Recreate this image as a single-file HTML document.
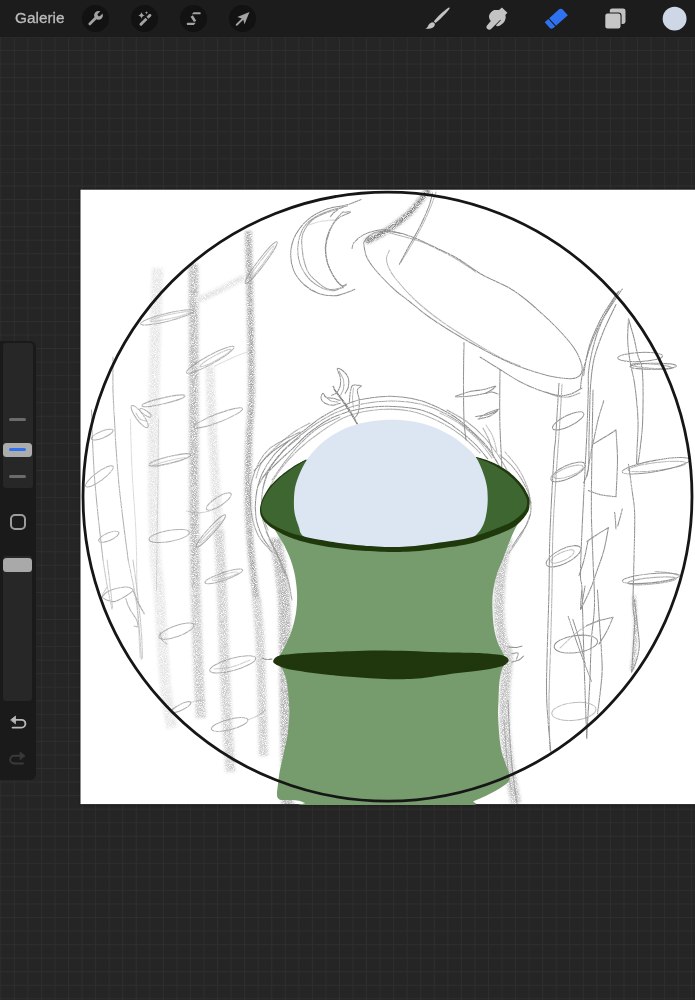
<!DOCTYPE html>
<html lang="fr">
<head>
<meta charset="utf-8">
<title>Procreate</title>
<style>
  html, body { margin: 0; padding: 0; }
  body {
    width: 695px; height: 1000px; overflow: hidden; position: relative;
    background-color: #252525;
    background-image:
      linear-gradient(to right, #2e2e2e 0, #2e2e2e 1px, transparent 1px),
      linear-gradient(to bottom, #2e2e2e 0, #2e2e2e 1px, transparent 1px);
    background-size: 13.56px 13.56px;
    background-position: 0.3px 9.4px;
    font-family: "Liberation Sans", sans-serif;
  }
  #topbar {
    position: absolute; left: 0; top: 0; width: 695px; height: 37px;
    background: #1c1c1c;
  }
  #gallery {
    position: absolute; left: 15.1px; top: 9.4px; font-size: 15.3px; line-height: 17px;
    color: #bcbcbc; letter-spacing: 0px; will-change: opacity; opacity: 0.999; -webkit-text-stroke: 0.3px #bcbcbc;
  }
  .tbtn {
    position: absolute; top: 5.1px; width: 26.6px; height: 26.6px; border-radius: 50%;
    background: #121212;
  }
  .tbtn svg { position: absolute; left: 0; top: 0; width: 26.6px; height: 26.6px; }
  #canvas {
    position: absolute; left: 80.5px; top: 189.7px; width: 620px; height: 614.4px;
    background: #ffffff; box-shadow: 0 0 2px 1px rgba(0,0,0,0.35);
  }
  #art { position: absolute; left: 0; top: 0; width: 695px; height: 1000px; }
  #sidebar {
    position: absolute; left: -4px; top: 341px; width: 39.5px; height: 438.7px;
    background: #1a1a1a; border-radius: 0 6px 6px 0;
  }
  .track { position: absolute; background: #272727; border-radius: 3px; }
  .thumb { position: absolute; background: #acacac; border-radius: 3.5px; }
  .tick { position: absolute; background: #6b6b6b; border-radius: 2px; height: 3.4px; left: 9.2px; width: 17.1px; }
</style>
</head>
<body>
<div id="canvas"></div>
<svg id="art" viewBox="0 0 695 1000">

  <defs>
    <clipPath id="cv"><rect x="80.5" y="189.7" width="620" height="614.4"/></clipPath>
    <filter id="grain" x="0" y="0" width="100%" height="100%" filterUnits="userSpaceOnUse" primitiveUnits="userSpaceOnUse">
      <feGaussianBlur in="SourceGraphic" stdDeviation="1.5" result="b"/>
      <feTurbulence type="fractalNoise" baseFrequency="1.1" numOctaves="2" seed="7" result="n"/>
      <feColorMatrix in="n" type="matrix" values="0 0 0 0 0  0 0 0 0 0  0 0 0 0 0  2.4 0 0 0 -0.55" result="a"/>
      <feComposite in="b" in2="a" operator="in"/>
    </filter>
    <filter id="grain2" x="0" y="0" width="100%" height="100%" filterUnits="userSpaceOnUse" primitiveUnits="userSpaceOnUse">
      <feTurbulence type="fractalNoise" baseFrequency="1.3" numOctaves="1" seed="11" result="n"/>
      <feColorMatrix in="n" type="matrix" values="0 0 0 0 0  0 0 0 0 0  0 0 0 0 0  2.2 0 0 0 -0.1" result="a"/>
      <feComposite in="SourceGraphic" in2="a" operator="in"/>
    </filter>
  </defs>
  <rect x="80.5" y="189.7" width="620" height="614.4" fill="#ffffff"/>
  <g clip-path="url(#cv)">
  <g id="sketch" fill="none" stroke="#8f8f8f" stroke-width="1.05" stroke-linecap="round" stroke-linejoin="round">
  <g filter="url(#grain)" stroke-linecap="butt">
<path d="M157.7,268.0 C157.2,281.7 155.7,319.7 155.0,350.0 C154.3,380.3 153.5,416.7 153.5,450.0 C153.5,483.3 154.1,526.7 155.0,550.0 C155.9,573.3 157.3,568.3 159.0,590.0 C160.7,611.7 162.9,657.0 165.0,680.0 C167.1,703.0 170.7,720.0 171.8,728.0" stroke="#e4e4e4" stroke-width="11.0"/>
<path d="M193.5,264.0 C193.6,285.0 193.7,350.7 193.8,390.0 C193.9,429.3 193.7,466.7 194.0,500.0 C194.3,533.3 195.2,575.0 195.5,590.0" stroke="#b4b4b4" stroke-width="9.5"/>
<path d="M195.5,588.0 C195.9,600.0 197.1,638.3 198.0,660.0 C198.9,681.7 200.5,708.3 201.0,718.0" stroke="#c4c4c4" stroke-width="10.0"/>
<path d="M248.3,231.0 C248.6,242.5 249.5,273.5 250.0,300.0 C250.5,326.5 251.7,366.7 251.5,390.0 C251.3,413.3 249.6,421.7 249.0,440.0 C248.4,458.3 247.8,483.3 248.0,500.0 C248.2,516.7 249.0,526.7 250.0,540.0 C251.0,553.3 252.9,570.0 254.0,580.0 C255.1,590.0 256.1,596.7 256.5,600.0" stroke="#a0a0a0" stroke-width="6.5"/>
<path d="M256.3,598.0 C256.9,605.0 259.1,623.0 260.0,640.0 C260.9,657.0 261.4,680.7 262.0,700.0 C262.6,719.3 263.2,746.7 263.5,756.0" stroke="#c8c8c8" stroke-width="9.0"/>
<path d="M210.0,366.0 C210.2,371.7 210.4,386.0 211.0,400.0 C211.6,414.0 212.6,433.3 213.5,450.0 C214.4,466.7 215.6,485.0 216.5,500.0 C217.4,515.0 218.6,533.3 219.0,540.0" stroke="#e0e0e0" stroke-width="9.0"/>
<path d="M218.8,530.0 C219.2,536.7 220.3,555.0 221.0,570.0 C221.7,585.0 222.2,598.3 223.0,620.0 C223.8,641.7 224.8,674.7 226.0,700.0 C227.2,725.3 229.8,760.0 230.5,772.0" stroke="#cacaca" stroke-width="10.0"/>
<path d="M275.0,538.0 C275.8,542.5 278.5,554.7 280.0,565.0 C281.5,575.3 283.2,585.8 284.0,600.0 C284.8,614.2 284.7,630.0 285.0,650.0 C285.3,670.0 285.5,694.0 286.0,720.0 C286.5,746.0 287.5,791.7 287.8,806.0" stroke="#b0b0b0" stroke-width="12.0"/>
<path d="M507.0,538.0 C505.9,544.2 501.8,563.0 500.5,575.0 C499.2,587.0 498.8,599.2 499.0,610.0 C499.2,620.8 500.6,632.5 502.0,640.0 C503.4,647.5 507.0,646.7 507.5,655.0 C508.0,663.3 505.4,677.5 505.0,690.0 C504.6,702.5 504.3,717.5 505.0,730.0 C505.7,742.5 507.2,752.8 509.0,765.0 C510.8,777.2 514.8,796.7 516.0,803.0" stroke="#bdbdbd" stroke-width="10.5"/>
<path d="M244.0,277.0 C240.0,279.2 228.0,286.0 220.0,290.0 C212.0,294.0 200.0,299.2 196.0,301.0" stroke="#dedede" stroke-width="6.0"/>
<path d="M429.0,189.0 C427.6,190.8 424.0,195.8 420.6,200.0 C417.2,204.2 412.9,209.8 408.5,214.0 C404.1,218.2 399.1,221.9 394.4,225.3 C389.7,228.7 385.1,231.7 380.3,234.4 C375.5,237.2 368.0,240.6 365.5,241.8" stroke="#6e6e6e" stroke-width="5.2"/>
<path d="M634.0,596.0 C634.2,600.8 635.4,616.0 635.5,625.0 C635.6,634.0 635.1,642.5 634.5,650.0 C633.9,657.5 632.4,666.7 632.0,670.0" stroke="#8a8a8a" stroke-width="2.6"/>
</g>
<g filter="url(#grain2)">
<path d="M361.3,199.4 C358.8,200.3 351.8,203.6 346.2,205.1 C340.6,206.6 333.7,206.4 327.5,208.7 C321.3,211.0 314.1,214.5 308.8,218.8 C303.5,223.1 298.8,229.1 295.8,234.6 C292.8,240.1 291.2,245.9 290.8,251.9 C290.4,257.9 291.4,265.1 293.7,270.6 C296.0,276.1 300.3,281.2 304.5,285.0 C308.7,288.8 313.8,291.8 318.8,293.6 C323.8,295.4 329.9,296.0 334.7,295.8 C339.5,295.6 344.2,293.3 347.6,292.2 C351.0,291.1 353.6,289.8 354.8,289.3"/>
<path d="M347.6,205.8 C343.5,207.0 330.1,209.9 323.2,213.0 C316.2,216.1 310.0,219.9 305.9,224.5 C301.8,229.1 299.9,234.7 298.7,240.4 C297.5,246.2 297.5,253.2 298.7,259.0 C299.9,264.8 302.5,270.3 305.9,274.9 C309.2,279.5 314.2,283.8 318.8,286.4 C323.4,289.0 328.6,290.9 333.2,290.7 C337.8,290.5 344.0,285.9 346.2,285.0" opacity="0.85"/>
<path d="M343.3,207.3 C338.8,209.0 322.7,213.0 316.0,217.3 C309.3,221.6 305.3,227.7 303.0,233.2 C300.7,238.7 301.6,244.2 302.3,250.4 C303.0,256.6 304.8,265.3 307.3,270.6 C309.8,275.9 313.8,279.0 317.4,282.1 C321.0,285.2 324.8,288.4 328.9,289.3 C333.0,290.2 339.7,288.1 341.9,287.8" opacity="0.85"/>
<path d="M350.5,212.3 C348.4,213.4 341.2,215.6 337.6,218.8 C334.0,222.0 330.9,226.9 328.9,231.7 C326.8,236.5 325.5,242.3 325.3,247.6 C325.1,252.9 325.9,258.4 327.5,263.4 C329.1,268.4 332.1,273.7 334.7,277.8 C337.3,281.9 341.9,286.1 343.3,287.8"/>
<path d="M343.3,211.6 C341.7,213.5 336.2,218.2 333.5,223.0 C330.8,227.8 328.1,235.1 326.8,240.4 C325.6,245.7 325.4,249.7 326.0,254.7 C326.6,259.7 328.0,265.6 330.4,270.6 C332.8,275.7 337.7,282.8 340.4,285.0 C343.1,287.2 345.5,284.2 346.5,284.0" opacity="0.85"/>
<path d="M330.4,216.6 C331.0,215.9 332.8,213.6 334.0,212.5 C335.2,211.4 337.0,210.4 337.6,210.0"/>
<path d="M344.0,212.5 C345.0,212.3 349.0,211.7 350.0,211.5"/>
<path d="M308.8,225.0 C310.7,224.4 315.7,222.3 320.0,221.5 C324.3,220.7 332.2,220.2 334.7,220.0" opacity="0.35"/>
<path d="M363.5,243.0 C364.4,241.8 366.6,237.9 369.0,236.0 C371.4,234.1 374.5,232.4 377.8,231.7 C381.1,230.9 385.1,231.2 389.0,231.5 C392.9,231.8 396.6,232.1 400.9,233.2 C405.2,234.3 410.2,236.1 415.0,238.0 C419.8,239.9 424.8,242.4 429.6,244.7 C434.4,246.9 439.2,249.1 444.0,251.5 C448.8,253.9 452.4,255.3 458.4,259.0 C464.4,262.7 473.9,269.8 480.0,273.5 C486.1,277.2 489.8,278.4 495.0,281.0 C500.2,283.6 505.7,285.8 511.0,289.0 C516.3,292.2 521.9,296.4 527.0,300.5 C532.1,304.6 537.2,309.4 541.9,313.7 C546.6,317.9 550.9,321.9 555.0,326.0 C559.1,330.1 563.4,334.8 566.6,338.5 C569.8,342.2 571.9,344.9 574.0,348.0 C576.1,351.1 577.7,354.0 579.0,357.0 C580.3,360.0 581.6,363.3 582.0,366.0 C582.4,368.7 582.3,371.1 581.5,373.0 C580.7,374.9 579.0,376.6 577.0,377.5 C575.0,378.4 573.2,378.7 569.7,378.7 C566.2,378.7 560.6,378.1 556.0,377.3 C551.4,376.5 546.9,375.4 541.9,374.0 C536.9,372.6 531.1,370.8 526.0,369.0 C520.9,367.2 516.2,365.4 511.0,363.2 C505.8,361.0 500.2,358.4 495.0,355.8 C489.8,353.2 485.2,350.6 480.0,347.8 C474.8,345.0 470.5,342.8 464.0,339.0 C457.5,335.2 447.5,329.2 441.0,325.0 C434.5,320.8 430.2,317.9 425.0,314.0 C419.8,310.1 414.3,305.3 409.5,301.5 C404.7,297.7 400.3,294.8 396.0,291.0 C391.7,287.2 387.4,283.0 383.6,279.0 C379.8,275.0 375.9,270.8 373.0,267.0 C370.1,263.2 367.9,260.0 366.3,256.0 C364.7,252.0 364.0,245.2 363.5,243.0"/>
<path d="M389.4,250.4 C388.9,251.7 386.7,255.4 386.5,258.0 C386.3,260.6 386.6,262.7 388.0,266.0 C389.4,269.3 390.5,272.3 395.0,278.0 C399.5,283.7 407.3,292.8 415.0,300.0 C422.7,307.2 431.8,314.3 441.0,321.0 C450.2,327.7 460.2,333.9 470.0,340.0 C479.8,346.1 491.7,353.2 500.0,357.5 C508.3,361.8 516.7,364.6 520.0,366.0" opacity="0.65"/>
<path d="M352.0,248.5 C352.3,247.5 352.0,244.8 354.0,242.5 C356.0,240.2 360.5,236.4 364.2,234.4 C367.9,232.4 372.6,231.1 376.3,230.4 C380.0,229.7 382.3,229.5 386.3,230.0 C390.3,230.5 398.0,232.8 400.4,233.4"/>
<path d="M390.0,233.0 C395.1,234.4 412.3,238.6 420.6,241.5 C428.9,244.4 433.9,247.5 440.0,250.5 C446.1,253.5 451.0,255.9 457.0,259.5 C463.0,263.1 472.8,269.9 476.0,272.0" opacity="0.70"/>
<path d="M480.0,357.0 C483.3,359.1 493.3,365.4 500.0,369.5 C506.7,373.6 513.3,378.3 520.0,381.8 C526.7,385.3 533.3,388.2 540.0,390.5 C546.7,392.8 555.1,395.2 560.4,395.7 C565.7,396.2 568.4,394.8 572.0,393.5 C575.6,392.2 580.3,388.9 582.0,388.0"/>
<path d="M432.5,193.0 C432.0,194.9 431.0,200.2 429.6,204.4 C428.2,208.6 425.9,213.7 424.0,218.0 C422.1,222.3 420.0,226.5 418.0,230.3 C416.0,234.1 413.9,237.7 412.0,241.0 C410.1,244.3 408.7,246.5 406.6,250.4 C404.5,254.3 400.6,261.9 399.4,264.2"/>
<path d="M436.0,192.0 C435.2,194.3 433.5,200.0 431.0,206.0 C428.5,212.0 424.7,220.8 421.0,228.0 C417.3,235.2 412.3,243.3 409.0,249.0 C405.7,254.7 402.3,259.8 401.0,262.0" opacity="0.60"/>
<path d="M464.0,342.5 C463.9,348.8 463.5,367.1 463.5,380.0 C463.5,392.9 463.6,410.0 464.0,420.0 C464.4,430.0 465.7,436.7 466.0,440.0"/>
<path d="M500.0,369.4 C500.0,377.8 499.5,403.8 499.8,420.0 C500.1,436.2 501.5,459.0 501.8,466.8"/>
<path d="M559.0,383.3 C558.7,387.8 557.9,400.6 557.3,410.0 C556.7,419.4 556.0,433.0 555.5,440.0 C555.0,447.0 554.9,441.9 554.2,451.9 C553.5,461.9 552.3,484.5 551.5,500.0 C550.7,515.5 550.0,529.7 549.6,544.7 C549.2,559.7 549.5,567.0 549.0,590.0 C548.5,613.0 546.7,661.1 546.5,682.8 C546.3,704.5 547.2,708.1 548.0,720.0 C548.8,731.9 550.5,748.3 551.0,754.0"/>
<path d="M562.0,384.0 C561.7,390.0 560.9,405.7 560.0,420.0 C559.1,434.3 557.7,451.7 556.5,470.0 C555.3,488.3 553.8,510.0 553.0,530.0 C552.2,550.0 552.4,570.0 552.0,590.0 C551.6,610.0 551.0,631.7 550.5,650.0 C550.0,668.3 549.1,683.3 549.0,700.0 C548.9,716.7 549.8,741.7 550.0,750.0" opacity="0.70"/>
<path d="M455.5,396.3 C457.9,395.5 465.2,392.6 470.0,391.5 C474.8,390.4 479.7,390.4 484.0,389.5 C488.3,388.6 495.5,385.7 495.8,386.3 C496.1,386.9 490.3,391.4 486.0,393.0 C481.7,394.6 475.0,395.3 470.0,396.0 C465.0,396.7 458.3,396.8 456.0,397.0"/>
<path d="M475.6,416.5 C477.7,416.2 484.3,415.5 488.0,414.5 C491.7,413.5 497.6,410.1 497.8,410.4 C498.0,410.7 492.3,415.1 489.0,416.5 C485.7,417.9 479.8,418.6 478.0,419.0"/>
<path d="M486.0,393.5 C487.0,393.2 490.0,391.9 492.0,392.0 C494.0,392.1 497.0,393.7 498.0,394.0"/>
<path d="M622.3,289.0 C620.2,292.1 613.5,302.0 610.0,307.5 C606.5,313.0 603.6,317.4 601.0,322.0 C598.4,326.6 596.5,330.7 594.5,335.4 C592.5,340.1 590.5,345.4 589.0,350.0 C587.5,354.6 586.4,358.9 585.2,363.2 C584.0,367.5 582.8,371.9 582.0,376.0 C581.2,380.1 580.8,386.0 580.5,388.0"/>
<path d="M617.7,292.0 C615.4,295.6 607.3,307.5 603.7,313.7 C600.1,319.9 598.3,323.8 596.0,329.0 C593.7,334.2 591.5,339.5 589.8,344.7 C588.1,349.9 587.0,354.9 586.0,360.0 C585.0,365.1 584.0,373.0 583.6,375.6"/>
<path d="M616.0,304.5 C614.0,308.8 607.6,321.2 604.0,330.0 C600.4,338.8 596.7,348.7 594.5,357.0 C592.3,365.3 591.8,372.0 591.0,380.0 C590.2,388.0 590.1,395.0 589.8,405.0 C589.5,415.0 589.2,429.2 589.0,440.0 C588.8,450.8 589.2,462.9 588.3,470.0 C587.4,477.1 584.4,480.7 583.6,482.8"/>
<path d="M619.0,291.0 C617.0,294.3 610.5,304.3 607.0,311.0 C603.5,317.7 600.5,324.2 598.0,331.0 C595.5,337.8 593.6,345.2 592.0,352.0 C590.4,358.8 589.1,365.7 588.5,372.0 C587.9,378.3 588.5,380.3 588.3,390.0 C588.0,399.7 587.5,416.7 587.0,430.0 C586.5,443.3 585.8,453.3 585.0,470.0 C584.2,486.7 582.8,512.4 582.0,530.0 C581.2,547.6 580.5,565.6 580.5,575.6 C580.5,585.6 581.4,575.9 582.0,590.0 C582.6,604.1 583.2,635.2 584.0,660.0 C584.8,684.8 586.2,725.4 586.7,738.5"/>
<path d="M593.0,390.0 C592.8,400.0 592.3,429.4 592.0,450.0 C591.7,470.6 591.2,495.4 591.4,513.7 C591.6,532.0 592.5,544.8 593.0,560.0 C593.5,575.2 594.8,591.7 594.5,605.0 C594.2,618.3 592.2,627.0 591.4,640.0 C590.6,653.0 590.4,670.3 589.8,682.8 C589.2,695.3 588.5,705.7 588.0,715.0 C587.5,724.3 586.9,734.6 586.7,738.5"/>
<path d="M597.5,590.0 C597.9,596.7 599.2,617.1 600.0,630.0 C600.8,642.9 602.1,657.3 602.2,667.3 C602.3,677.3 601.3,682.3 600.5,690.0 C599.7,697.7 598.0,709.8 597.5,713.7"/>
<path d="M603.7,400.8 C602.8,404.0 599.5,414.1 598.0,420.0 C596.5,425.9 595.8,430.6 594.5,436.4 C593.2,442.2 591.8,448.3 590.5,455.0 C589.2,461.7 587.3,473.0 586.7,476.6"/>
<path d="M628.5,318.9 C628.4,322.5 627.4,333.1 627.7,340.4 C628.0,347.7 629.1,355.7 630.3,362.9 C631.4,370.1 633.3,374.1 634.6,383.6 C635.9,393.1 637.6,408.9 638.0,420.0 C638.4,431.1 637.2,442.7 637.0,450.0 C636.8,457.3 636.6,461.7 636.5,464.0"/>
<path d="M628.5,318.9 C629.4,321.9 632.1,330.8 633.7,337.0 C635.3,343.2 636.5,350.2 638.0,356.0 C639.5,361.8 641.6,360.8 642.4,371.5 C643.2,382.2 643.1,406.9 642.7,420.0 C642.3,433.1 640.8,442.6 640.0,450.0 C639.2,457.4 638.2,461.8 637.8,464.2"/>
<path d="M628.5,464.2 C629.1,468.5 631.0,481.8 632.0,490.0 C633.0,498.2 634.4,502.0 634.7,513.7 C635.0,525.4 634.3,544.8 634.0,560.0 C633.7,575.2 632.9,594.8 633.0,605.0 C633.1,615.2 634.7,613.5 634.7,621.0 C634.7,628.5 633.5,641.5 633.0,650.0 C632.5,658.5 631.8,668.3 631.6,672.0"/>
<path d="M634.5,600.0 C634.9,603.7 636.2,614.4 637.0,622.0 C637.8,629.6 639.5,639.0 639.3,645.7 C639.1,652.4 637.3,657.6 636.0,662.0 C634.7,666.4 632.3,670.3 631.6,672.0"/>
<ellipse cx="640.1" cy="357.0" rx="22.4" ry="4.6" transform="rotate(-2.6 640.1 357.0)"/>
<ellipse cx="653.2" cy="366.3" rx="23.2" ry="3.0" transform="rotate(-0.7 653.2 366.3)"/>
<ellipse cx="651.5" cy="366.2" rx="20.6" ry="2.2" transform="rotate(4.9 651.5 366.2)" opacity="0.70"/>
<ellipse cx="656.1" cy="465.8" rx="34.4" ry="5.5" transform="rotate(-10.4 656.1 465.8)"/>
<ellipse cx="657.0" cy="466.5" rx="29.2" ry="4.0" transform="rotate(-6.9 657.0 466.5)" opacity="0.70"/>
<ellipse cx="650.9" cy="578.3" rx="28.7" ry="4.6" transform="rotate(-5.4 650.9 578.3)"/>
<ellipse cx="652.0" cy="580.8" rx="24.1" ry="3.2" transform="rotate(-5.4 652.0 580.8)" opacity="0.70"/>
<path d="M655.0,571.5 C657.2,571.7 664.2,571.9 668.0,572.5 C671.8,573.1 676.3,574.6 678.0,575.0" opacity="0.70"/>
<ellipse cx="568.2" cy="420.9" rx="17.3" ry="5.5" transform="rotate(-26.6 568.2 420.9)"/>
<ellipse cx="568.0" cy="471.9" rx="18.7" ry="6.5" transform="rotate(-24.8 568.0 471.9)"/>
<ellipse cx="568.5" cy="471.8" rx="15.4" ry="4.5" transform="rotate(-19.9 568.5 471.8)" opacity="0.60"/>
<ellipse cx="563.5" cy="556.3" rx="19.0" ry="7.2" transform="rotate(-26.6 563.5 556.3)"/>
<ellipse cx="562.5" cy="556.5" rx="12.7" ry="4.2" transform="rotate(-25.6 562.5 556.5)" opacity="0.60"/>
<ellipse cx="575.9" cy="644.1" rx="21.9" ry="8.5" transform="rotate(-8.1 575.9 644.1)"/>
<ellipse cx="573.9" cy="711.4" rx="22.2" ry="8.8" transform="rotate(-6.1 573.9 711.4)" opacity="0.60"/>
<path d="M546.0,392.0 C547.7,392.7 552.3,395.2 556.0,396.0 C559.7,396.8 564.0,397.5 568.0,397.0 C572.0,396.5 578.0,393.7 580.0,393.0" opacity="0.80"/>
<path d="M593.0,444.0 C595.0,442.8 601.2,439.3 605.0,437.0 C608.8,434.7 614.2,431.2 616.0,430.0"/>
<path d="M616.0,430.0 C616.2,435.0 617.5,448.9 617.5,460.0 C617.5,471.1 616.2,490.6 616.0,496.7"/>
<path d="M616.0,496.7 C613.7,496.4 606.6,496.0 602.0,495.0 C597.4,494.0 590.6,491.2 588.3,490.5"/>
<path d="M586.7,541.6 C588.6,540.3 594.4,536.3 598.0,534.0 C601.6,531.7 606.7,528.8 608.4,527.7"/>
<path d="M608.4,527.7 C607.7,531.4 605.8,543.0 604.0,550.0 C602.2,557.0 599.8,562.7 597.5,569.4 C595.2,576.1 592.8,583.3 590.0,590.0 C587.2,596.7 582.2,606.2 580.7,609.5"/>
<path d="M588.0,541.0 C587.3,544.2 585.5,554.2 584.0,560.0 C582.5,565.8 579.8,573.0 579.0,575.6"/>
<path d="M614.6,512.2 C614.8,513.7 615.3,518.2 615.5,521.0 C615.7,523.8 615.9,527.7 616.0,529.0"/>
<path d="M622.3,509.0 C621.9,510.5 620.8,515.2 620.0,518.0 C619.2,520.8 618.1,524.7 617.7,526.0"/>
<path d="M582.0,590.0 C581.8,591.7 581.2,596.9 581.0,600.0 C580.8,603.1 580.6,607.1 580.5,608.5"/>
<path d="M585.0,586.0 C584.7,588.0 583.7,594.1 583.0,598.0 C582.3,601.9 581.1,607.6 580.7,609.5"/>
<path d="M568.2,616.3 C569.5,620.2 573.4,632.4 576.0,640.0 C578.6,647.6 581.4,655.1 584.0,662.0 C586.6,668.9 590.2,678.1 591.4,681.3" stroke-width="1.00"/>
<path d="M586.7,625.6 C588.9,624.8 595.6,621.9 600.0,620.5 C604.4,619.1 610.8,617.8 613.0,617.2"/>
<path d="M613.0,617.2 C612.0,619.5 609.3,626.5 607.0,631.0 C604.7,635.5 600.3,641.8 599.0,644.0"/>
<path d="M572.8,619.4 C574.0,623.2 577.9,634.5 580.0,642.0 C582.1,649.5 584.3,660.5 585.2,664.2"/>
<path d="M560.0,648.0 C563.3,645.0 573.3,634.8 580.0,630.0 C586.7,625.2 596.7,621.2 600.0,619.5" opacity="0.50"/>
<g opacity="0.72">
<path d="M113.0,357.0 C113.0,362.5 112.8,379.5 113.0,390.0 C113.2,400.5 114.0,410.4 114.5,420.0 C115.0,429.6 115.2,436.7 116.0,447.5 C116.8,458.3 117.8,473.0 119.0,485.0 C120.2,497.0 121.5,507.0 123.0,519.5 C124.5,532.0 127.3,553.2 128.2,560.0"/>
<path d="M91.5,410.0 C91.7,415.0 92.0,429.0 92.5,440.0 C93.0,451.0 93.5,463.5 94.4,476.0 C95.3,488.5 96.6,501.0 98.0,515.0 C99.4,529.0 102.2,552.5 103.0,560.0"/>
<path d="M158.5,419.0 C158.4,429.2 158.2,459.8 158.0,480.0 C157.8,500.2 157.2,521.7 157.0,540.0 C156.8,558.3 156.6,581.7 156.5,590.0" opacity="0.40"/>
<path d="M130.4,419.0 C130.7,427.5 131.1,450.8 132.0,470.0 C132.9,489.2 135.2,514.0 136.0,534.0 C136.8,554.0 136.6,574.8 137.0,590.0 C137.4,605.2 138.0,613.7 138.5,625.0 C139.0,636.3 139.8,652.5 140.0,658.0" opacity="0.45"/>
<ellipse cx="261.2" cy="262.6" rx="26.1" ry="3.4" transform="rotate(-52.9 261.2 262.6)"/>
<ellipse cx="262.0" cy="262.0" rx="20.0" ry="1.6" transform="rotate(-53.1 262.0 262.0)" opacity="0.70"/>
<ellipse cx="167.1" cy="317.4" rx="27.4" ry="4.0" transform="rotate(-13.6 167.1 317.4)"/>
<ellipse cx="170.0" cy="316.5" rx="20.5" ry="2.0" transform="rotate(-12.7 170.0 316.5)" opacity="0.60"/>
<ellipse cx="210.2" cy="359.8" rx="27.1" ry="4.4" transform="rotate(-28.6 210.2 359.8)"/>
<ellipse cx="215.5" cy="358.0" rx="17.7" ry="2.4" transform="rotate(-28.7 215.5 358.0)" opacity="0.70"/>
<path d="M215.0,366.0 C217.8,364.7 226.7,360.3 232.0,358.0 C237.3,355.7 244.5,353.0 247.0,352.0" opacity="0.40"/>
<ellipse cx="139.7" cy="416.6" rx="13.4" ry="3.8" transform="rotate(53.8 139.7 416.6)"/>
<ellipse cx="145.5" cy="412.8" rx="6.7" ry="2.2" transform="rotate(34.3 145.5 412.8)"/>
<path d="M136.0,413.0 C136.7,414.0 138.3,417.7 140.0,419.0 C141.7,420.3 145.0,420.7 146.0,421.0" opacity="0.70"/>
<ellipse cx="163.4" cy="400.8" rx="22.1" ry="3.0" transform="rotate(-13.1 163.4 400.8)"/>
<ellipse cx="102.2" cy="434.6" rx="11.6" ry="3.4" transform="rotate(-22.0 102.2 434.6)"/>
<ellipse cx="218.1" cy="418.0" rx="26.2" ry="4.2" transform="rotate(-20.9 218.1 418.0)"/>
<ellipse cx="169.9" cy="459.8" rx="21.5" ry="3.4" transform="rotate(-13.6 169.9 459.8)"/>
<ellipse cx="169.0" cy="462.2" rx="17.5" ry="1.6" transform="rotate(-14.0 169.0 462.2)" opacity="0.60"/>
<ellipse cx="99.4" cy="476.4" rx="16.9" ry="4.4" transform="rotate(-36.5 99.4 476.4)"/>
<ellipse cx="218.8" cy="501.5" rx="14.5" ry="4.4" transform="rotate(-32.9 218.8 501.5)"/>
<path d="M186.5,511.0 C188.4,511.3 194.2,513.0 198.0,513.0 C201.8,513.0 207.6,511.3 209.5,511.0" opacity="0.60"/>
<ellipse cx="210.9" cy="530.9" rx="21.5" ry="3.2" transform="rotate(-47.8 210.9 530.9)"/>
<ellipse cx="210.0" cy="532.5" rx="14.5" ry="1.4" transform="rotate(-46.4 210.0 532.5)" opacity="0.70"/>
<ellipse cx="169.2" cy="536.0" rx="20.5" ry="5.6" transform="rotate(-10.1 169.2 536.0)"/>
<ellipse cx="108.8" cy="536.7" rx="10.9" ry="3.8" transform="rotate(-23.2 108.8 536.7)"/>
<ellipse cx="223.8" cy="576.3" rx="19.9" ry="3.8" transform="rotate(-18.9 223.8 576.3)"/>
<ellipse cx="225.0" cy="576.2" rx="13.5" ry="1.8" transform="rotate(-16.1 225.0 576.2)" opacity="0.60"/>
<ellipse cx="176.5" cy="631.1" rx="18.6" ry="5.4" transform="rotate(-19.9 176.5 631.1)"/>
<path d="M160.0,632.0 C160.3,633.3 160.8,638.0 162.0,640.0 C163.2,642.0 166.2,643.3 167.0,644.0" opacity="0.80"/>
<ellipse cx="232.8" cy="664.4" rx="23.8" ry="6.0" transform="rotate(-15.5 232.8 664.4)"/>
<path d="M214.0,669.0 C217.0,668.7 226.0,668.5 232.0,667.0 C238.0,665.5 247.0,661.2 250.0,660.0" opacity="0.60"/>
<ellipse cx="181.3" cy="707.1" rx="10.6" ry="3.0" transform="rotate(-26.6 181.3 707.1)"/>
<path d="M190.8,702.4 C192.0,702.1 195.6,700.9 198.0,700.5 C200.4,700.1 203.8,700.1 205.0,700.0" opacity="0.50"/>
<ellipse cx="229.6" cy="724.5" rx="18.8" ry="5.2" transform="rotate(-14.6 229.6 724.5)"/>
<path d="M247.8,719.8 C249.3,719.2 254.1,717.6 257.0,716.0 C259.9,714.4 263.8,711.2 265.2,710.3" opacity="0.60"/>
<path d="M103.0,560.0 C103.7,564.2 105.5,576.8 107.0,585.0 C108.5,593.2 111.2,605.2 112.0,609.2" opacity="0.70"/>
<path d="M107.2,560.0 C107.7,564.2 109.1,577.0 110.0,585.0 C110.9,593.0 112.2,604.2 112.6,608.0" opacity="0.70"/>
<path d="M128.2,560.0 C129.4,566.0 133.6,585.0 135.4,596.0 C137.2,607.0 138.0,615.4 139.0,626.0 C140.0,636.6 141.0,653.9 141.4,659.5" opacity="0.70"/>
<path d="M133.0,560.0 C133.8,566.0 136.4,584.0 137.8,596.0 C139.2,608.0 140.6,621.6 141.4,632.0 C142.2,642.4 142.4,653.9 142.6,658.3" opacity="0.70"/>
<path d="M101.8,597.2 C102.7,596.3 104.8,593.4 107.0,592.0 C109.2,590.6 111.9,589.6 115.0,588.8 C118.1,588.0 122.8,586.8 125.8,587.0 C128.8,587.2 133.0,588.5 133.0,590.0 C133.0,591.5 128.8,594.1 125.8,596.0 C122.8,597.9 118.0,600.6 115.0,601.4 C112.0,602.1 110.2,601.2 108.0,600.5 C105.8,599.8 102.8,597.8 101.8,597.2"/>
<path d="M101.8,597.0 C102.2,596.2 103.2,593.6 104.0,592.0 C104.8,590.4 106.2,588.3 106.6,587.6" opacity="0.70"/>
<path d="M125.8,598.4 C126.1,599.3 126.7,602.0 127.5,604.0 C128.3,606.0 129.1,607.7 130.6,610.4 C132.1,613.1 135.4,617.3 136.6,620.0 C137.8,622.7 138.2,625.5 137.8,626.5 C137.4,627.5 134.8,626.1 134.2,626.0"/>
<path d="M133.0,590.0 C133.8,592.0 135.9,598.0 137.8,602.0 C139.7,606.0 143.3,612.0 144.4,614.0" stroke-width="1.30"/>
</g>
<path d="M254.0,471.0 C257.0,467.8 264.6,458.1 272.0,452.0 C279.4,445.9 290.0,440.4 298.3,434.6 C306.6,428.8 313.3,422.4 322.0,417.0 C330.7,411.6 342.7,405.6 350.7,402.4 C358.7,399.2 363.3,399.0 370.0,398.0 C376.7,397.0 384.0,396.2 391.0,396.3 C398.0,396.4 405.3,397.1 412.0,398.5 C418.7,399.9 424.1,401.3 431.3,404.4 C438.5,407.5 447.6,412.0 455.0,417.0 C462.4,422.0 469.9,429.3 475.6,434.6 C481.3,439.9 485.0,443.6 489.0,449.0 C493.0,454.4 498.0,463.8 499.8,466.8"/>
<path d="M262.0,478.0 C264.7,475.3 273.3,466.6 278.0,462.0 C282.7,457.4 285.1,455.5 290.3,450.7 C295.5,445.9 302.3,438.4 309.0,433.0 C315.7,427.6 322.9,422.3 330.6,418.5 C338.3,414.7 346.9,412.0 355.0,410.0 C363.1,408.0 371.2,406.9 379.0,406.4 C386.8,405.9 394.7,406.3 402.0,407.0 C409.3,407.7 416.3,408.4 423.0,410.4 C429.7,412.4 435.9,415.6 442.0,419.0 C448.1,422.4 454.0,426.4 459.5,430.6 C465.0,434.8 470.3,439.3 475.0,444.0 C479.7,448.7 485.6,456.3 487.7,458.8"/>
<path d="M258.0,486.0 C260.0,482.8 265.0,473.7 270.0,467.0 C275.0,460.3 281.3,452.5 288.0,446.0 C294.7,439.5 302.2,433.5 310.0,428.0 C317.8,422.5 326.3,417.0 335.0,413.0 C343.7,409.0 352.7,406.0 362.0,404.0 C371.3,402.0 381.3,401.0 391.0,401.0 C400.7,401.0 410.8,401.8 420.0,404.0 C429.2,406.2 438.0,409.8 446.0,414.0 C454.0,418.2 461.3,423.5 468.0,429.0 C474.7,434.5 481.2,441.5 486.0,447.0 C490.8,452.5 495.2,459.5 497.0,462.0" opacity="0.80"/>
<path d="M268.0,490.0 C270.0,486.7 275.0,476.7 280.0,470.0 C285.0,463.3 291.0,456.5 298.0,450.0 C305.0,443.5 313.7,436.7 322.0,431.0 C330.3,425.3 338.3,419.6 348.0,416.0 C357.7,412.4 369.7,410.3 380.0,409.5 C390.3,408.7 400.3,409.1 410.0,411.0 C419.7,412.9 429.3,416.8 438.0,421.0 C446.7,425.2 455.0,430.7 462.0,436.0 C469.0,441.3 477.0,450.2 480.0,453.0" opacity="0.70"/>
<path d="M272.0,480.0 C274.0,477.2 279.3,469.0 284.0,463.0 C288.7,457.0 294.3,449.8 300.0,444.0 C305.7,438.2 311.3,432.5 318.0,428.0 C324.7,423.5 336.3,418.8 340.0,417.0" opacity="0.80"/>
<path d="M256.0,478.0 C257.0,475.3 258.7,467.2 262.0,462.0 C265.3,456.8 270.7,452.0 276.0,447.0 C281.3,442.0 288.3,436.0 294.0,432.0 C299.7,428.0 307.3,424.5 310.0,423.0" opacity="0.70"/>
<path d="M447.0,410.0 C450.2,411.8 459.8,416.5 466.0,421.0 C472.2,425.5 478.7,431.3 484.0,437.0 C489.3,442.7 494.2,449.5 498.0,455.0 C501.8,460.5 505.5,467.5 507.0,470.0" opacity="0.80"/>
<path d="M440.0,413.0 C443.3,414.8 453.7,419.5 460.0,424.0 C466.3,428.5 472.7,434.3 478.0,440.0 C483.3,445.7 489.7,455.0 492.0,458.0" opacity="0.60"/>
<path d="M290.0,440.0 C287.3,442.5 278.7,449.3 274.0,455.0 C269.3,460.7 265.0,467.2 262.0,474.0 C259.0,480.8 257.0,488.7 256.0,496.0 C255.0,503.3 255.0,511.3 256.0,518.0 C257.0,524.7 259.7,531.0 262.0,536.0 C264.3,541.0 268.7,546.0 270.0,548.0"/>
<path d="M300.0,437.0 C297.0,439.5 287.3,446.2 282.0,452.0 C276.7,457.8 271.3,464.8 268.0,472.0 C264.7,479.2 262.8,487.7 262.0,495.0 C261.2,502.3 262.0,510.2 263.0,516.0 C264.0,521.8 267.2,527.7 268.0,530.0" opacity="0.80"/>
<path d="M284.0,450.0 C281.7,453.0 273.5,461.7 270.0,468.0 C266.5,474.3 264.2,484.7 263.0,488.0" opacity="0.80"/>
<path d="M300.0,432.0 C294.7,435.0 276.0,442.0 268.0,450.0 C260.0,458.0 254.8,470.0 252.0,480.0 C249.2,490.0 250.0,500.8 251.0,510.0 C252.0,519.2 254.5,528.0 258.0,535.0 C261.5,542.0 269.7,549.2 272.0,552.0" opacity="0.80"/>
<path d="M262.6,520.0 C263.8,523.3 267.1,533.3 270.0,540.0 C272.9,546.7 277.0,553.3 280.0,560.0 C283.0,566.7 286.0,573.3 288.0,580.0 C290.0,586.7 291.3,596.7 292.0,600.0" opacity="0.80"/>
<path d="M266.0,532.0 C267.7,535.3 272.8,544.8 276.0,552.0 C279.2,559.2 283.5,571.2 285.0,575.0" opacity="0.60"/>
<path d="M500.0,455.0 C502.0,456.8 508.3,461.8 512.0,466.0 C515.7,470.2 519.2,475.2 522.0,480.0 C524.8,484.8 527.5,490.0 529.0,495.0 C530.5,500.0 531.3,505.2 531.0,510.0 C530.7,514.8 529.0,519.7 527.0,524.0 C525.0,528.3 521.5,532.2 519.0,536.0 C516.5,539.8 513.2,545.2 512.0,547.0" opacity="0.90"/>
<path d="M505.0,452.0 C507.2,454.7 514.3,462.3 518.0,468.0 C521.7,473.7 524.8,480.2 527.0,486.0 C529.2,491.8 530.3,500.2 531.0,503.0" opacity="0.70"/>
<path d="M530.0,515.0 C529.0,517.5 526.3,525.3 524.0,530.0 C521.7,534.7 518.5,539.2 516.0,543.0 C513.5,546.8 510.2,551.3 509.0,553.0" opacity="0.70"/>
<path d="M480.0,417.0 C481.7,416.2 486.8,413.3 490.0,412.0 C493.2,410.7 497.5,409.5 499.0,409.0"/>
<path d="M483.0,428.0 C484.0,430.0 487.3,435.5 489.0,440.0 C490.7,444.5 492.3,452.5 493.0,455.0" opacity="0.80"/>
<path d="M486.0,425.0 C487.2,427.0 491.2,432.5 493.0,437.0 C494.8,441.5 496.3,449.5 497.0,452.0" opacity="0.60"/>
<path d="M357.3,424.0 C356.1,422.1 352.8,416.3 350.3,412.4 C347.8,408.4 344.9,404.2 342.2,400.3 C339.5,396.4 335.5,391.1 334.2,389.2" stroke-width="1.50" stroke="#808080"/>
<path d="M355.5,420.0 C354.2,417.8 350.6,410.9 348.0,407.0 C345.4,403.1 342.1,399.2 340.0,396.5 C337.9,393.8 336.2,391.5 335.5,390.5" stroke-width="1.00" stroke="#8a8a8a"/>
<path d="M331.6,395.2 C332.4,394.9 334.8,394.7 336.2,393.2 C337.6,391.7 339.5,388.9 340.2,386.2 C340.9,383.5 340.7,379.9 340.2,377.0 C339.7,374.1 336.7,369.6 337.2,368.6 C337.7,367.6 341.3,369.4 343.2,371.0 C345.1,372.6 347.4,375.3 348.3,378.0 C349.2,380.7 348.8,384.7 348.3,387.2 C347.8,389.7 345.7,392.2 345.2,393.2"/>
<path d="M339.0,371.0 C339.8,372.5 342.8,377.0 343.5,380.0 C344.2,383.0 344.1,386.3 343.5,389.0 C342.9,391.7 340.6,394.8 340.0,396.0" opacity="0.70"/>
<path d="M340.2,403.3 C339.0,403.6 335.7,405.3 333.2,405.3 C330.7,405.3 327.0,404.5 325.0,403.3 C323.0,402.1 321.3,400.0 321.0,398.3 C320.7,396.6 322.2,393.4 323.0,393.2 C323.8,393.0 324.3,396.4 326.0,397.3 C327.7,398.2 330.8,397.8 333.2,398.3 C335.6,398.8 339.0,400.1 340.2,400.5"/>
<path d="M324.5,396.0 C325.6,396.8 328.8,400.0 331.0,401.0 C333.2,402.0 336.8,401.8 338.0,402.0" opacity="0.70"/>
<path d="M349.3,402.3 C349.5,400.6 349.8,395.0 350.3,392.2 C350.8,389.4 351.2,386.9 352.3,385.7 C353.4,384.5 355.5,385.2 357.0,385.2 C358.5,385.2 361.3,384.9 361.4,385.7 C361.4,386.5 357.6,387.8 357.3,390.2 C357.0,392.6 359.1,396.6 359.3,400.3 C359.5,404.0 359.1,409.4 358.3,412.4 C357.5,415.4 355.0,417.4 354.3,418.4"/>
<path d="M353.5,388.0 C353.3,389.7 352.5,394.7 352.5,398.0 C352.5,401.3 353.3,406.3 353.5,408.0" opacity="0.60"/>
<path d="M333.2,386.6 C333.4,386.8 334.0,387.8 334.2,388.0" stroke-width="1.40"/>
<path d="M508.0,647.0 C509.3,647.1 513.7,647.7 516.0,647.5 C518.3,647.3 521.0,646.2 522.0,646.0"/>
<path d="M511.0,654.0 C512.2,653.8 517.1,652.2 518.0,653.0 C518.9,653.8 516.8,658.0 516.5,659.0"/>
<path d="M512.0,662.0 C513.2,661.7 517.1,661.0 519.0,660.0 C520.9,659.0 522.8,656.7 523.5,656.0"/>
<path d="M262.0,658.0 C262.8,658.2 265.3,659.3 267.0,659.5 C268.7,659.7 271.2,659.1 272.0,659.0"/>
<path d="M508.0,700.0 C508.3,706.7 509.2,727.5 510.0,740.0 C510.8,752.5 511.8,764.4 513.0,775.0 C514.2,785.6 516.3,798.8 517.0,803.5" opacity="0.80"/>
<path d="M504.0,720.0 C504.5,726.7 505.8,748.3 507.0,760.0 C508.2,771.7 510.3,785.0 511.0,790.0" opacity="0.60"/>
</g>

  </g>
  <path fill="#769c6d" d="M270.0,520.0 C271.2,522.2 274.6,529.3 277.0,533.5 C279.4,537.7 281.9,540.9 284.2,545.2 C286.4,549.6 288.7,554.5 290.5,559.6 C292.3,564.7 293.9,569.8 295.0,575.8 C296.1,581.8 297.0,589.2 297.1,595.5 C297.2,601.8 296.8,607.5 295.9,613.5 C294.9,619.5 293.2,626.1 291.4,631.5 C289.6,636.9 286.8,642.1 285.0,645.9 C283.2,649.6 282.1,651.6 280.6,654.0 C279.1,656.4 275.7,657.5 276.0,660.0 C276.3,662.5 280.6,665.6 282.4,669.3 C284.2,672.9 285.8,676.8 286.9,681.9 C287.9,687.0 288.3,694.5 288.7,700.0 C289.1,705.5 289.5,709.2 289.3,715.0 C289.1,720.8 288.4,728.8 287.5,735.0 C286.6,741.2 285.2,746.2 284.0,752.0 C282.8,757.8 281.0,764.7 280.0,770.0 C279.0,775.3 278.5,779.8 278.0,784.0 C277.5,788.2 276.8,792.4 277.0,795.0 C277.2,797.6 278.0,798.7 279.5,799.5 C281.0,800.3 283.6,799.9 286.0,800.0 C288.4,800.1 291.7,799.8 294.0,800.0 C296.3,800.2 298.2,800.5 300.0,801.0 C301.8,801.5 303.2,802.2 305.0,803.0 C306.8,803.8 285.0,805.5 311.0,806.0 C337.0,806.5 433.8,806.8 461.0,806.0 C488.2,805.2 469.9,802.7 474.0,801.0 C478.1,799.3 481.8,797.8 485.6,796.0 C489.4,794.2 493.6,792.0 497.0,790.0 C500.4,788.0 503.7,786.1 505.8,784.3 C507.9,782.5 509.1,781.0 509.5,779.0 C509.9,777.0 509.2,774.8 508.5,772.0 C507.8,769.2 506.1,765.3 505.0,762.0 C503.9,758.7 502.6,756.0 501.7,752.0 C500.8,748.0 500.0,742.5 499.5,738.0 C499.0,733.5 498.8,729.1 498.5,724.8 C498.2,720.5 498.0,716.1 498.0,712.0 C498.0,707.9 498.3,705.0 498.5,700.0 C498.7,695.0 498.8,687.0 499.4,681.9 C500.0,676.8 500.9,672.8 502.0,669.3 C503.1,665.8 505.8,663.7 506.0,661.0 C506.2,658.3 504.4,656.1 503.0,653.0 C501.6,649.9 499.1,646.5 497.6,642.3 C496.1,638.1 494.9,633.4 494.0,628.0 C493.1,622.6 492.7,616.0 492.5,610.0 C492.3,604.0 492.2,598.0 493.0,592.0 C493.8,586.0 495.4,579.4 497.0,574.0 C498.6,568.6 501.0,564.4 502.8,559.6 C504.6,554.8 506.1,550.0 508.0,545.2 C509.9,540.4 512.2,535.0 514.2,530.8 C516.2,526.6 519.0,521.8 520.0,520.0"/>
Z<path fill="#3e6631" d="M260.5,507.6 C261.0,506.0 261.9,501.4 263.5,498.0 C265.1,494.6 267.7,490.6 270.0,487.5 C272.3,484.4 274.8,482.0 277.5,479.5 C280.2,477.0 282.9,474.7 286.0,472.4 C289.1,470.1 292.7,467.6 296.0,465.5 C299.3,463.4 300.3,462.2 306.0,460.0 C311.7,457.8 315.7,454.2 330.0,452.0 C344.3,449.8 371.7,447.2 392.0,447.0 C412.3,446.8 438.0,449.3 452.0,451.0 C466.0,452.7 470.2,455.6 476.0,457.3 C481.8,459.0 483.4,459.6 487.0,461.0 C490.6,462.4 494.3,464.2 497.6,466.0 C500.9,467.8 504.1,469.9 507.0,472.0 C509.9,474.1 512.4,476.5 514.8,478.9 C517.2,481.3 519.6,483.9 521.5,486.5 C523.4,489.1 525.2,492.4 526.3,494.7 C527.4,496.9 528.0,498.3 528.3,500.0 C528.6,501.7 528.3,504.2 528.3,505.0 L528.3,505.0 C528.1,505.8 527.8,508.3 527.0,510.0 C526.2,511.7 524.9,513.3 523.5,515.0 C522.1,516.7 520.4,518.4 518.5,520.0 C516.6,521.6 514.8,523.3 512.0,524.9 C509.2,526.5 505.6,528.0 502.0,529.5 C498.4,531.0 495.9,532.1 490.4,534.0 C484.9,535.9 477.2,539.0 468.8,540.9 C460.4,542.8 449.0,544.2 440.0,545.5 C431.0,546.8 423.0,547.9 415.0,548.6 C407.0,549.3 399.5,549.5 392.0,549.5 C384.5,549.5 377.2,549.0 370.0,548.6 C362.8,548.2 356.5,547.8 349.0,546.9 C341.5,546.0 332.7,544.8 325.0,543.5 C317.3,542.2 309.2,540.5 303.0,539.0 C296.8,537.5 292.5,536.0 288.0,534.2 C283.5,532.5 279.2,530.2 276.0,528.5 C272.8,526.8 270.9,525.5 269.0,524.0 C267.1,522.5 265.7,521.3 264.4,519.6 C263.1,517.9 261.9,516.0 261.3,514.0 C260.7,512.0 260.6,508.7 260.5,507.6Z"/>
<path fill="#dce6f3" d="M304.0,536.6 C299.4,534.0 300.0,529.6 298.5,526.0 C297.0,522.4 295.8,518.8 295.0,515.0 C294.2,511.2 293.9,507.8 293.9,503.3 C293.9,498.8 294.1,492.9 295.0,488.0 C295.9,483.1 297.5,478.7 299.5,474.0 C301.5,469.3 303.7,464.6 306.8,460.0 C309.9,455.4 313.8,450.6 318.0,446.5 C322.2,442.4 326.7,438.8 332.0,435.5 C337.3,432.2 343.7,428.8 350.0,426.5 C356.3,424.2 363.0,422.6 370.0,421.5 C377.0,420.4 384.8,419.8 392.0,419.8 C399.2,419.8 406.3,420.4 413.0,421.5 C419.7,422.6 425.8,424.2 432.0,426.5 C438.2,428.8 444.5,431.8 450.0,435.0 C455.5,438.2 460.7,442.3 465.0,446.0 C469.3,449.7 473.0,452.8 476.0,457.3 C479.0,461.8 481.4,468.2 483.2,473.0 C485.0,477.8 486.1,481.9 486.8,486.0 C487.6,490.1 487.6,493.9 487.7,497.6 C487.8,501.3 487.6,504.3 487.2,508.0 C486.8,511.7 486.0,516.5 485.0,520.0 C484.0,523.5 482.5,526.5 481.0,529.0 C479.5,531.5 477.8,533.3 476.0,535.0 C474.2,536.7 473.5,537.8 470.0,539.0 C466.5,540.2 461.7,541.3 455.0,542.5 C448.3,543.7 440.5,545.1 430.0,546.0 C419.5,546.9 404.5,548.0 392.0,548.0 C379.5,548.0 366.0,547.1 355.0,546.0 C344.0,544.9 334.5,543.1 326.0,541.5 C317.5,539.9 308.6,539.2 304.0,536.6Z"/>
<path fill="#1f390d" d="M261.0,507.7 L261.3,506.7 L261.6,505.3 L262.1,503.6 L262.6,501.8 L263.3,500.0 L264.0,498.2 L264.9,496.5 L265.9,494.8 L267.0,493.0 L268.1,491.2 L269.3,489.5 L270.5,487.9 L271.6,486.4 L272.8,485.0 L274.1,483.7 L275.3,482.4 L276.6,481.2 L277.9,479.9 L279.2,478.7 L280.6,477.5 L282.0,476.3 L283.4,475.2 L284.9,474.0 L286.4,472.9 L287.9,471.7 L289.6,470.5 L291.2,469.3 L292.9,468.2 L294.6,467.0 L296.3,466.0 L298.0,464.9 L299.9,463.8 L301.8,462.7 L303.6,461.8 L305.1,461.0 L306.2,460.4 L305.8,459.6 L304.7,460.2 L303.2,461.0 L301.4,461.9 L299.5,462.9 L297.5,464.0 L295.7,465.0 L294.0,466.1 L292.3,467.2 L290.6,468.4 L288.9,469.6 L287.2,470.7 L285.6,471.9 L284.1,473.1 L282.6,474.3 L281.2,475.4 L279.8,476.6 L278.4,477.8 L277.1,479.1 L275.8,480.3 L274.5,481.6 L273.2,482.9 L271.9,484.2 L270.7,485.6 L269.5,487.1 L268.3,488.8 L267.1,490.5 L266.0,492.3 L264.9,494.2 L263.9,496.0 L263.0,497.8 L262.3,499.6 L261.6,501.5 L261.1,503.3 L260.6,505.0 L260.3,506.4 L260.0,507.5Z"/>
<path fill="#1f390d" d="M475.9,457.7 L477.1,458.1 L478.7,458.7 L480.7,459.4 L482.7,460.2 L484.8,461.0 L486.7,461.7 L488.5,462.5 L490.2,463.4 L492.0,464.2 L493.7,465.1 L495.4,466.0 L497.1,467.0 L498.7,467.9 L500.3,468.9 L501.8,469.9 L503.4,470.9 L504.8,471.9 L506.2,473.0 L507.6,474.1 L508.9,475.2 L510.2,476.3 L511.5,477.5 L512.7,478.6 L513.9,479.8 L515.1,481.0 L516.2,482.2 L517.4,483.5 L518.5,484.7 L519.5,486.0 L520.4,487.3 L521.4,488.6 L522.2,490.0 L523.1,491.4 L523.8,492.8 L524.5,494.1 L525.1,495.3 L525.6,496.3 L526.1,497.2 L526.4,498.0 L526.6,498.8 L526.9,499.5 L527.0,500.2 L527.1,501.0 L527.1,501.9 L527.1,502.8 L527.1,503.6 L527.0,504.4 L527.0,504.9 L529.6,505.1 L529.6,504.5 L529.7,503.8 L529.7,502.9 L529.7,501.9 L529.7,500.8 L529.6,499.8 L529.4,498.8 L529.1,498.0 L528.8,497.1 L528.4,496.2 L528.0,495.2 L527.5,494.1 L526.8,492.9 L526.1,491.5 L525.3,490.1 L524.5,488.6 L523.5,487.1 L522.6,485.7 L521.5,484.4 L520.4,483.1 L519.3,481.8 L518.1,480.5 L516.9,479.2 L515.7,478.0 L514.5,476.8 L513.2,475.6 L511.9,474.4 L510.6,473.2 L509.2,472.1 L507.8,471.0 L506.2,469.9 L504.7,468.9 L503.1,467.9 L501.5,466.9 L499.8,466.0 L498.1,465.0 L496.4,464.2 L494.6,463.3 L492.8,462.5 L491.0,461.7 L489.1,461.0 L487.3,460.3 L485.3,459.6 L483.2,458.9 L481.0,458.3 L479.0,457.7 L477.3,457.2 L476.1,456.9Z"/>
<path fill="#1f390d" d="M527.0,504.7 L526.9,505.3 L526.7,506.0 L526.5,506.9 L526.2,507.8 L525.9,508.6 L525.5,509.3 L525.1,510.0 L524.6,510.7 L524.0,511.5 L523.4,512.2 L522.7,512.9 L522.0,513.7 L521.2,514.4 L520.4,515.2 L519.6,515.9 L518.7,516.7 L517.8,517.4 L516.9,518.1 L515.9,518.9 L514.9,519.7 L513.9,520.4 L512.9,521.1 L511.8,521.8 L510.6,522.5 L509.3,523.2 L507.8,523.9 L506.1,524.6 L504.4,525.3 L502.6,526.0 L500.8,526.7 L499.1,527.5 L497.5,528.1 L495.8,528.8 L494.0,529.5 L491.9,530.3 L489.4,531.2 L486.5,532.2 L483.2,533.4 L479.7,534.6 L476.0,535.8 L472.1,537.0 L468.1,538.0 L463.8,538.9 L459.1,539.7 L454.2,540.5 L449.2,541.2 L444.2,541.9 L439.6,542.5 L435.2,543.2 L430.9,543.9 L426.8,544.5 L422.7,545.1 L418.7,545.6 L414.8,546.0 L410.9,546.3 L407.0,546.6 L403.2,546.8 L399.5,546.9 L395.7,547.0 L392.0,547.1 L388.3,547.0 L384.6,546.9 L381.0,546.7 L377.4,546.5 L373.7,546.3 L370.2,546.1 L366.6,545.9 L363.2,545.6 L359.8,545.3 L356.4,545.0 L352.9,544.6 L349.3,544.2 L345.5,543.7 L341.5,543.2 L337.4,542.7 L333.4,542.0 L329.4,541.4 L325.5,540.7 L321.6,540.1 L317.8,539.4 L314.0,538.7 L310.3,538.0 L306.8,537.2 L303.6,536.5 L300.7,535.8 L298.1,535.1 L295.6,534.4 L293.3,533.7 L291.0,532.9 L288.8,532.2 L286.6,531.3 L284.4,530.5 L282.4,529.6 L280.4,528.7 L278.5,527.8 L276.8,527.0 L275.3,526.2 L274.0,525.5 L272.9,524.9 L271.8,524.2 L270.8,523.6 L269.9,522.9 L268.9,522.2 L268.1,521.6 L267.3,520.9 L266.6,520.3 L266.0,519.6 L265.3,518.9 L264.7,518.1 L264.1,517.3 L263.5,516.4 L263.0,515.5 L262.5,514.6 L262.2,513.7 L261.8,512.7 L261.6,511.6 L261.4,510.4 L261.3,509.2 L261.2,508.3 L261.0,507.6 L260.0,507.6 L260.0,508.3 L260.0,509.3 L260.0,510.5 L260.1,511.8 L260.2,513.1 L260.4,514.3 L260.8,515.4 L261.2,516.4 L261.7,517.4 L262.2,518.4 L262.8,519.4 L263.5,520.3 L264.1,521.2 L264.8,522.0 L265.6,522.8 L266.4,523.6 L267.2,524.3 L268.1,525.1 L269.1,525.9 L270.1,526.7 L271.2,527.5 L272.4,528.3 L273.7,529.1 L275.2,530.0 L276.8,531.0 L278.7,532.0 L280.6,533.1 L282.7,534.2 L284.9,535.2 L287.2,536.2 L289.5,537.2 L291.7,538.1 L294.1,539.0 L296.7,539.8 L299.4,540.7 L302.4,541.5 L305.6,542.3 L309.2,543.2 L312.9,544.0 L316.7,544.8 L320.6,545.5 L324.5,546.3 L328.5,546.9 L332.6,547.5 L336.7,548.1 L340.8,548.6 L344.8,549.1 L348.7,549.6 L352.4,549.9 L356.0,550.2 L359.4,550.5 L362.9,550.7 L366.3,550.9 L369.8,551.1 L373.5,551.3 L377.1,551.5 L380.8,551.7 L384.5,551.8 L388.2,551.9 L392.0,551.9 L395.8,552.0 L399.6,551.9 L403.4,551.8 L407.3,551.7 L411.2,551.5 L415.2,551.2 L419.3,550.9 L423.4,550.5 L427.5,550.1 L431.7,549.6 L436.0,549.0 L440.4,548.5 L445.1,547.8 L450.0,547.1 L455.1,546.4 L460.1,545.6 L464.9,544.8 L469.5,543.8 L473.7,542.7 L477.8,541.5 L481.6,540.3 L485.2,539.0 L488.5,537.9 L491.4,536.8 L493.9,535.9 L496.1,535.1 L498.0,534.4 L499.8,533.7 L501.4,533.0 L503.2,532.3 L505.0,531.5 L506.7,530.7 L508.5,529.9 L510.2,529.0 L511.9,528.2 L513.4,527.3 L514.8,526.4 L516.1,525.5 L517.2,524.6 L518.2,523.7 L519.2,522.8 L520.1,521.9 L521.1,521.0 L521.9,520.0 L522.8,519.1 L523.6,518.2 L524.3,517.2 L525.0,516.3 L525.7,515.4 L526.3,514.5 L526.9,513.5 L527.5,512.6 L528.0,511.7 L528.5,510.7 L528.8,509.6 L529.1,508.5 L529.3,507.5 L529.4,506.6 L529.5,505.8 L529.6,505.3Z"/>
<path fill="#20360c" d="M273.2,661.0 C273.4,660.0 274.4,658.4 275.5,657.5 C276.6,656.6 278.2,656.0 280.0,655.5 C281.8,655.0 282.0,655.0 286.0,654.6 C290.0,654.2 297.2,653.4 304.0,653.0 C310.8,652.6 319.3,652.3 327.0,652.0 C334.7,651.7 341.5,651.5 350.0,651.3 C358.5,651.0 368.0,650.5 378.0,650.5 C388.0,650.5 399.7,650.7 410.0,651.0 C420.3,651.3 429.0,652.0 440.0,652.3 C451.0,652.6 466.8,652.7 476.0,653.0 C485.2,653.3 490.5,653.9 495.0,654.3 C499.5,654.7 500.9,654.9 503.0,655.5 C505.1,656.1 506.6,657.1 507.5,658.0 C508.4,658.9 508.9,659.8 508.6,660.8 C508.4,661.8 507.3,663.0 506.0,664.0 C504.7,665.0 503.7,665.8 501.0,666.6 C498.3,667.4 494.2,668.3 490.0,669.0 C485.8,669.7 481.3,670.3 476.0,671.0 C470.7,671.7 464.0,672.2 458.0,673.0 C452.0,673.8 445.5,674.7 440.0,675.5 C434.5,676.3 430.0,677.2 425.0,677.8 C420.0,678.4 415.8,678.8 410.0,679.0 C404.2,679.2 396.7,679.3 390.0,679.2 C383.3,679.1 376.7,678.6 370.0,678.2 C363.3,677.8 356.7,677.3 350.0,676.8 C343.3,676.3 336.2,675.6 330.0,675.0 C323.8,674.4 318.3,673.7 313.0,673.0 C307.7,672.3 302.5,671.6 298.0,670.8 C293.5,670.0 289.3,669.3 286.0,668.4 C282.7,667.5 280.0,666.4 278.0,665.5 C276.0,664.6 275.0,664.0 274.2,663.2 C273.4,662.5 273.0,662.0 273.2,661.0Z"/>

  <circle cx="387.5" cy="496.6" r="304.5" fill="none" stroke="#161616" stroke-width="2.8"/>
  </g>

</svg>

<div id="topbar">
  <div id="gallery">Galerie</div>
  <div class="tbtn" style="left:82.2px"></div>
<div class="tbtn" style="left:131.2px"></div>
<div class="tbtn" style="left:180.2px"></div>
<div class="tbtn" style="left:229.2px"></div>
<svg id="ticons" style="position:absolute;left:0;top:0" width="695" height="37" viewBox="0 0 695 37">
<g transform="translate(98.5,15.3) rotate(45)"><rect x="-1.35" y="2" width="2.7" height="11.6" rx="1.2" fill="#a3a3a3"/><circle cx="0" cy="0" r="4.4" fill="#a3a3a3"/><path d="M-1.6,-5 L-1.6,-0.6 Q-1.6,0.6 0,0.6 Q1.6,0.6 1.6,-0.6 L1.6,-5 Z" fill="#121212"/></g><g fill="none" stroke="#a3a3a3" stroke-linecap="round"><path d="M140.7,24.6 L146.5,18.8" stroke-width="2.8" stroke-linecap="butt"/><circle cx="140.9" cy="24.4" r="1.3" fill="#a3a3a3" stroke="none"/><path d="M147.5,17.8 L150.2,15.1" stroke-width="2.8" stroke-linecap="butt"/><circle cx="150.0" cy="15.3" r="1.3" fill="#a3a3a3" stroke="none"/></g><path fill="#a3a3a3" d="M141.50,12.10 Q141.92,15.08 144.90,15.50 Q141.92,15.92 141.50,18.90 Q141.08,15.92 138.10,15.50 Q141.08,15.08 141.50,12.10 Z"/><path fill="#a3a3a3" d="M146.50,11.30 Q146.75,12.55 148.00,12.80 Q146.75,13.05 146.50,14.30 Q146.25,13.05 145.00,12.80 Q146.25,12.55 146.50,11.30 Z"/><path fill="#a3a3a3" d="M191.8,14.35 L193.7,12.15 L199.9,12.15 Q200.6,12.15 200.6,12.85 L200.6,13.65 Q200.6,14.35 199.9,14.35 Z"/><path fill="none" stroke="#a3a3a3" stroke-width="2.7" stroke-linecap="butt" d="M191.7,16.0 L195.1,21.4"/><path fill="#a3a3a3" d="M187.5,22.8 L195.7,22.8 L193.8,25.0 L187.5,25.0 Q186.8,25.0 186.8,24.3 L186.8,23.5 Q186.8,22.8 187.5,22.8 Z"/><path fill="#a3a3a3" d="M249.5,12.0 L237.3,17.1 L241.8,18.4 L235.9,24.2 Q235.5,24.9 236.1,25.5 Q236.7,26.0 237.4,25.6 L243.3,19.8 L244.5,24.2 Z"/><path fill="#c3c3c3" d="M449.4,7.6 C449.9,8.0 449.6,8.8 449.0,9.6 C446,13.5 440,19.5 435.6,23.0 L433.8,21.4 C437,17 443.5,11 447.6,8.2 C448.3,7.7 449.0,7.3 449.4,7.6 Z"/><path fill="#c3c3c3" d="M433.2,22.2 L434.9,23.8 C435.2,26.0 433.4,27.8 430.6,28.4 C428.6,28.9 426.6,28.9 425.2,28.8 C426.6,28.2 427.4,27.4 427.9,26.2 C428.6,23.9 430.6,22.2 433.2,22.2 Z"/><path fill="#c3c3c3" d="M501.9,7.6 L507.4,12.8 L505.3,14.9 C505.9,16.6 505.8,18.4 505.2,19.6 C504.9,20.8 504.4,21.8 503.7,22.6 C502.8,23.8 501.4,24.8 500.1,25.4 C499.2,25.9 498.4,26.2 497.6,26.2 C496.8,26.2 496.2,25.7 496.0,25.2 L500.9,20.3 L500.3,19.7 L491.4,28.8 C490.4,29.8 488.6,29.9 487.5,29.1 C486.2,28.2 486.0,26.6 487.0,25.5 L490.8,21.1 C489.8,20.2 489.3,19.2 489.2,18.1 C489.0,17.2 488.9,16.4 489.1,15.6 C489.4,14.4 489.9,13.5 490.8,12.6 C491.6,11.6 492.6,10.8 493.6,10.3 C494.2,10.0 494.8,9.9 495.6,9.9 L499.1,9.9 Z"/><g transform="translate(556.1,18.6) rotate(-42)"><path fill="#2f72ef" d="M-10.9,-4.9 L-6.0,-4.9 L-6.0,5.3 L-7.6,5.3 Q-10.9,5.3 -10.9,2.0 Z"/><path fill="#2f72ef" d="M-4.9,-4.9 L7.7,-4.9 Q11.0,-4.9 11.0,-1.6 L11.0,5.3 L-4.9,5.3 Z"/></g><rect x="609.8" y="8.4" width="15.7" height="15.5" rx="2.4" fill="#c1c1c1"/><rect x="604.2" y="12.5" width="17.4" height="17.0" rx="3.2" fill="#1c1c1c"/><rect x="605.3" y="13.6" width="15.2" height="14.9" rx="2.2" fill="#c6c6c6"/><circle cx="674.6" cy="18.65" r="11.95" fill="#cdd7e5"/></svg>

</div>

<div id="sidebar"></div>
<div class="track" style="left:2.9px;top:342.8px;width:29.8px;height:145px"></div>
<div class="track" style="left:3.1px;top:556px;width:29.1px;height:145.2px"></div>
<div class="tick" style="top:417.8px"></div>
<div class="tick" style="top:474.8px"></div>
<div class="thumb" style="left:3.2px;top:442.8px;width:28.9px;height:13.9px"></div>
<div class="tick" style="top:448.1px;background:#2f72ef"></div>
<div class="thumb" style="left:3.4px;top:557.7px;width:28.8px;height:14.1px;background:#a9a9a9"></div>
<div style="position:absolute;left:9.8px;top:513.8px;width:12.3px;height:12.4px;border:2px solid #9c9c9c;border-radius:5px"></div>
<svg style="position:absolute;left:0;top:700px" width="40" height="80" viewBox="0 700 40 80"><g transform="translate(18.1,722.0)" fill="none" stroke="#bababa" stroke-width="1.85" stroke-linecap="round" stroke-linejoin="round"><path d="M-5.5,5.6 L3.4,5.6 A3.9,3.9 0 0,0 3.4,-2.2 L-3.0,-2.2"/><path fill="#bababa" stroke-width="0.8" d="M-7.2,-2.2 L-2.6,-5.9 L-2.6,1.5 Z"/></g><g transform="translate(17.5,757.9) scale(-1,1)" fill="none" stroke="#3a3a3a" stroke-width="1.85" stroke-linecap="round" stroke-linejoin="round"><path d="M-5.5,5.6 L3.4,5.6 A3.9,3.9 0 0,0 3.4,-2.2 L-3.0,-2.2"/><path fill="#3a3a3a" stroke-width="0.8" d="M-7.2,-2.2 L-2.6,-5.9 L-2.6,1.5 Z"/></g></svg>

</body>
</html>
